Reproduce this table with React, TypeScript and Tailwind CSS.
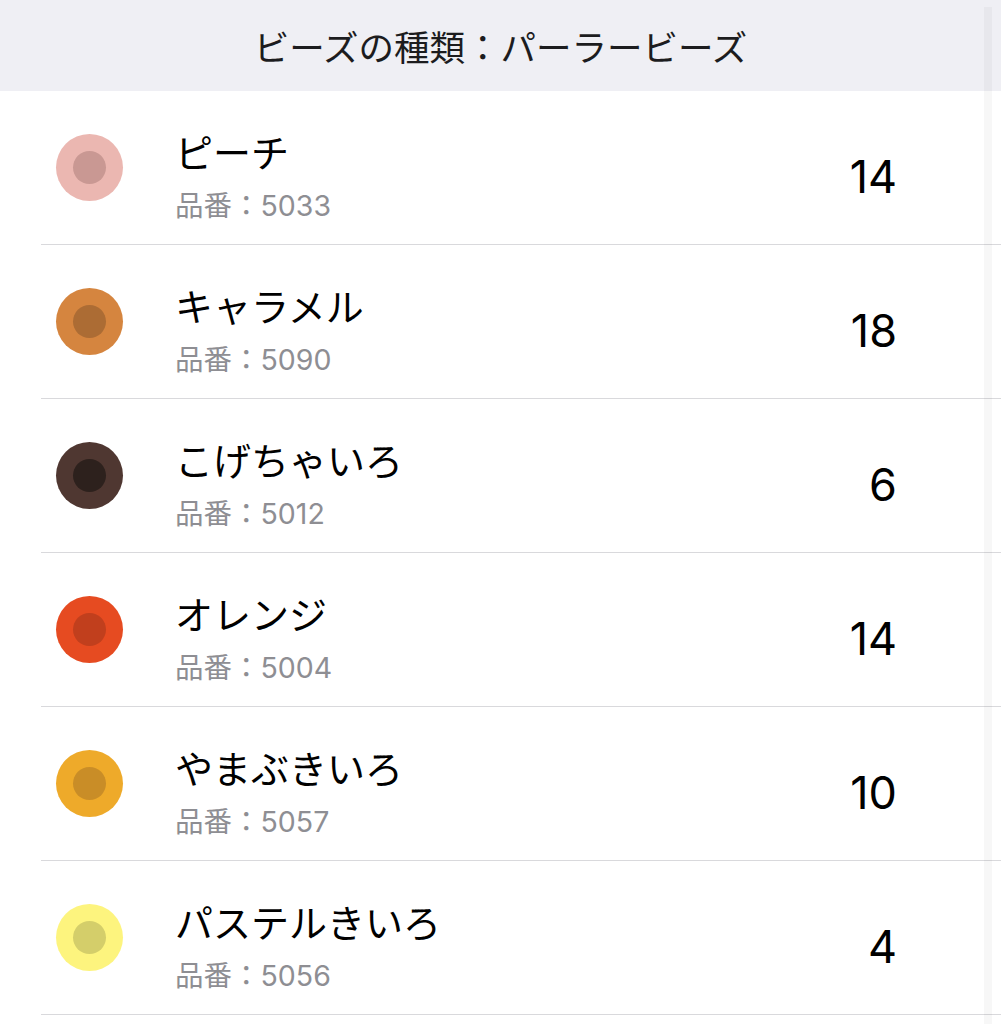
import React from 'react';

interface Bead {
  name: string;
  code: string;
  count: number;
  outer: string;
  inner: string;
}

const beads: Bead[] = [
  { name: 'ピーチ', code: '5033', count: 14, outer: 'bg-[#ebb7b1]', inner: 'bg-[#c99893]' },
  { name: 'キャラメル', code: '5090', count: 18, outer: 'bg-[#d5853f]', inner: 'bg-[#ac6c34]' },
  { name: 'こげちゃいろ', code: '5012', count: 6, outer: 'bg-[#4f3731]', inner: 'bg-[#2d211d]' },
  { name: 'オレンジ', code: '5004', count: 14, outer: 'bg-[#e64b21]', inner: 'bg-[#c13f1d]' },
  { name: 'やまぶきいろ', code: '5057', count: 10, outer: 'bg-[#eeaa2a]', inner: 'bg-[#c98d27]' },
  { name: 'パステルきいろ', code: '5056', count: 4, outer: 'bg-[#fdf47e]', inner: 'bg-[#d4ce6a]' },
];

const jp = "font-['Noto_Sans_CJK_JP','Noto_Sans',sans-serif]";
const num = "font-['Inter','Noto_Sans',sans-serif]";

export default function App() {
  return (
    <div className={`relative w-[1001px] h-[1024px] overflow-hidden bg-white ${jp}`}>
      {/* Section header */}
      <div className="h-[91px] bg-[#efeff4] flex items-center justify-center">
        <span className="text-[35.5px] text-[#1c1c1e]">ビーズの種類：パーラービーズ</span>
      </div>

      {beads.map((b) => (
        <div key={b.code} className="h-[154px] ml-[41px] pl-[15px] flex items-center border-b border-[#d9d9dc]">
          <div className={`w-[67px] h-[67px] rounded-full flex items-center justify-center shrink-0 ${b.outer}`}>
            <div className={`w-[33px] h-[33px] rounded-full ${b.inner}`} />
          </div>
          <div className="flex-1 ml-[52px] flex flex-col pt-[18px]">
            <span className="text-[38px] leading-[44px] text-black">{b.name}</span>
            <span className="text-[28.5px] leading-[36px] text-[#8e8e93] mt-[13px]">
              品番：<span className={num}>{b.code}</span>
            </span>
          </div>
          <span className={`w-[120px] text-right mr-[104px] mt-[18px] text-[45px] text-black ${num}`}>
            {b.count}
          </span>
        </div>
      ))}

      {/* scroll indicator track */}
      <div className="absolute right-[9px] top-[7px] bottom-0 w-[8px] bg-black/[0.03]" />
    </div>
  );
}
